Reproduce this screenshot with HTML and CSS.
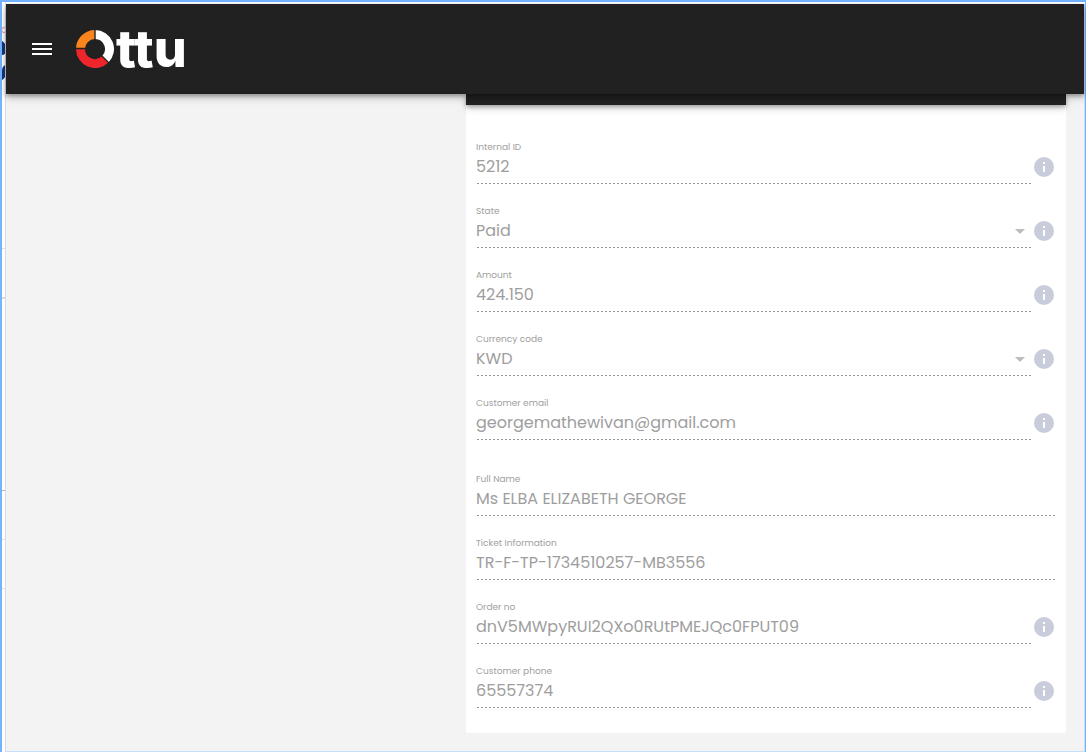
FILE: index.html
```html
<!DOCTYPE html>
<html lang="en">
<head>
<meta charset="utf-8">
<title>Ottu</title>
<link rel="stylesheet" href="styles.css">
</head>
<body>
<svg class="defs" aria-hidden="true">
  <symbol id="info" viewBox="0 0 24 24"><path d="M12 2a10 10 0 1 0 0 20 10 10 0 0 0 0-20zm1 15h-2v-6h2zm0-8h-2V7h2z"/></symbol>
  <symbol id="arrow" viewBox="0 0 10 5"><path d="M0 0h10L5 5z"/></symbol>
</svg>
<div class="frame">
  <div class="gutter" aria-hidden="true">
    <svg class="gutter-art" width="4" height="750" viewBox="0 0 4 750">
      <circle cx="2" cy="28" r="2.5" fill="none" stroke="#f58a8a"/>
      <path d="M0 39Q4 41 4 47T0 53zM4 63Q0 64 0 69V78Q4 76 4 70z" fill="#17347c"/>
      <path d="M0 246.500h4M0 537.500h4M0 586.500h4" stroke="#dddde0"/>
      <path d="M0 296h4" stroke="#d9d9dc" stroke-width="2"/>
      <path d="M0 488.500h4" stroke="#b4b4bc"/>
    </svg>
  </div>
  <div class="page">
    <header class="topbar">
      <button class="menu" type="button" aria-label="Menu">
        <svg width="20" height="12" viewBox="0 0 20 12"><path d="M0 0h20v2H0zM0 5h20v2H0zM0 10h20v2H0z" fill="#fff"/></svg>
      </button>
      <a class="logo" href="#" aria-label="Ottu">
        <svg width="38" height="38" viewBox="0 0 38 38" fill="none" stroke-width="9">
          <path d="M4.500 19A14.500 14.500 0 0 1 19 4.500" stroke="#f9831d"/>
          <path d="M19 4.500A14.500 14.500 0 0 1 29.250 29.250" stroke="#fff"/>
          <path d="M29.250 29.250A14.500 14.500 0 0 1 4.500 19" stroke="#ee252b"/>
          <path d="M19 0v10M0 18.500h10M25 25l8.500 8.500" stroke="#212121" stroke-width="1.400"/>
        </svg>
        <span class="wordmark">ttu</span>
      </a>
    </header>
    <main class="content">
      <form class="card">
        <div class="card-head"></div>
        <div class="fields">
          <div class="field">
            <div class="control"><label for="iid">Internal ID</label><input id="iid" value="5212" readonly></div>
            <button class="info" type="button" aria-label="About Internal ID"><svg><use href="#info"/></svg></button>
          </div>
          <div class="field">
            <div class="control"><label for="state">State</label><select id="state" disabled><option>Paid</option></select><svg class="arrow"><use href="#arrow"/></svg></div>
            <button class="info" type="button" aria-label="About State"><svg><use href="#info"/></svg></button>
          </div>
          <div class="field">
            <div class="control"><label for="amount">Amount</label><input id="amount" value="424.150" readonly></div>
            <button class="info" type="button" aria-label="About Amount"><svg><use href="#info"/></svg></button>
          </div>
          <div class="field">
            <div class="control"><label for="currency">Currency code</label><select id="currency" disabled><option>KWD</option></select><svg class="arrow"><use href="#arrow"/></svg></div>
            <button class="info" type="button" aria-label="About Currency code"><svg><use href="#info"/></svg></button>
          </div>
          <div class="field">
            <div class="control"><label for="email">Customer email</label><input id="email" value="georgemathewivan@gmail.com" readonly></div>
            <button class="info" type="button" aria-label="About Customer email"><svg><use href="#info"/></svg></button>
          </div>
          <div class="field section">
            <div class="control"><label for="name">Full Name</label><input id="name" value="Ms ELBA ELIZABETH GEORGE" readonly></div>
          </div>
          <div class="field">
            <div class="control"><label for="ticket">Ticket Information</label><input id="ticket" value="TR-F-TP-1734510257-MB3556" readonly></div>
          </div>
          <div class="field">
            <div class="control"><label for="order">Order no</label><input id="order" value="dnV5MWpyRUI2QXo0RUtPMEJQc0FPUT09" readonly></div>
            <button class="info" type="button" aria-label="About Order no"><svg><use href="#info"/></svg></button>
          </div>
          <div class="field">
            <div class="control"><label for="phone">Customer phone</label><input id="phone" value="65557374" readonly></div>
            <button class="info" type="button" aria-label="About Customer phone"><svg><use href="#info"/></svg></button>
          </div>
        </div>
      </form>
    </main>
  </div>
</div>
</body>
</html>
```
FILE: styles.css
```css
* { box-sizing: border-box; }
body { margin: 0; font-family: Poppins, Inter, sans-serif; background: #fff; }
button { padding: 0; border: 0; background: none; }
.defs { position: absolute; width: 0; height: 0; }
.frame {
  display: flex;
  min-height: 100vh;
  border: 2px solid #74b4ff;
  border-right-width: 1px;
  border-bottom-width: 1px;
}
.gutter { flex: 0 0 4px; border-right: 1px solid #dcdcdc; overflow: hidden; }
.gutter-art { display: block; }
.page {
  flex: 1;
  min-width: 0;
  margin-top: 2px;
  background: #f3f3f3;
  border-right: 1px solid #c8dffb;
  border-bottom: 1px solid #c8dffb;
}
.topbar {
  position: relative;
  display: flex;
  align-items: center;
  gap: 24px;
  height: 90px;
  padding: 0 26px;
  background: #212121;
  box-shadow: 0 2px 4px rgba(0,0,0,.3), 0 4px 8px rgba(0,0,0,.18);
}
.menu { display: flex; }
.logo { display: flex; align-items: center; gap: 2px; color: #fff; text-decoration: none; }
.wordmark { font: 800 52px/40px Inter, sans-serif; }
.content { display: flex; justify-content: flex-end; padding: 0 18px 18px; }
.card {
  flex: 0 1 600px;
  min-width: 0;
  background: #fff;
  border-radius: 0 0 2px 2px;
}
.card-head {
  height: 11px;
  background: #212121;
  box-shadow: 0 2px 4px rgba(0,0,0,.3), 0 3px 10px rgba(0,0,0,.15);
}
.fields { display: grid; gap: 20px; padding: 35px 10px 25px; }
.field { display: flex; align-items: flex-start; }
.section { margin-top: 12px; }
.control {
  position: relative;
  flex: 1;
  min-width: 0;
  padding-bottom: 4px;
  background: repeating-linear-gradient(90deg, transparent 0 1px, #949494 1px 3px, transparent 3px 4px) left bottom / 100% 1px no-repeat;
}
label { display: block; font-size: 9px; line-height: 14px; color: #a0a0a0; }
input, select {
  display: block;
  width: 100%;
  height: 26px;
  margin: 0;
  padding: 0;
  border: 0;
  border-radius: 0;
  outline: 0;
  appearance: none;
  background: transparent;
  color: #9e9e9e;
  opacity: 1;
  font: 400 16px/26px Poppins, Inter, sans-serif;
}
.arrow {
  position: absolute;
  right: 7px;
  bottom: 14px;
  width: 10px;
  height: 5px;
  fill: #bdbdbd;
}
.info { flex: none; display: flex; margin-top: 15px; }
.info svg { width: 24px; height: 24px; fill: #c9ccda; }
```
